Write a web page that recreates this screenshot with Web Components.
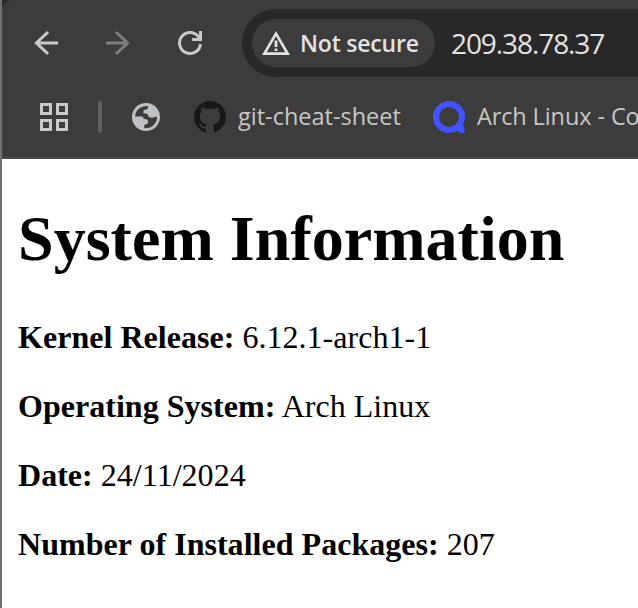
<!DOCTYPE html>
<html lang="en">
<head>
<meta charset="utf-8">
<title>System Information</title>
<style>
html,body{margin:0;height:100%;overflow:hidden;background:#fff}
</style>
</head>
<body>
<browser-window>
  <tool-bar slot="chrome">
    <ui-icon name="back"></ui-icon>
    <ui-icon name="forward"></ui-icon>
    <ui-icon name="reload"></ui-icon>
    <address-bar status="Not secure">209.38.78.37</address-bar>
  </tool-bar>
  <bookmark-bar slot="chrome">
    <ui-icon slot="apps" name="apps"></ui-icon>
    <book-mark icon="globe"></book-mark>
    <book-mark icon="github" style="--track:0px">git-cheat-sheet</book-mark>
    <book-mark icon="arch" style="--track:-.1px">Arch Linux - Co</book-mark>
  </bookmark-bar>
  <system-info heading="System Information">
    <info-line label="Kernel Release:">6.12.1-arch1-1</info-line>
    <info-line label="Operating System:">Arch Linux</info-line>
    <info-line label="Date:">24/11/2024</info-line>
    <info-line label="Number of Installed Packages:">207</info-line>
  </system-info>
</browser-window>
<script>
class Base extends HTMLElement{
  constructor(){super();this.attachShadow({mode:'open'});}
  connectedCallback(){this.shadowRoot.innerHTML=this.render();}
}
const icons={
  back:[36,36,'<path fill="#c9c9c9" d="M30 16.400H12.100l9.100-8.300L19 6 6.200 18 19 30l2.200-2.100-9.100-8.300H30z"/>'],
  forward:[36,36,'<path fill="#7d7d7d" d="M6 16.400H23.900l-9.100-8.300L17 6l12.800 12L17 30l-2.200-2.100 9.100-8.300H6z"/>'],
  reload:[36,36,'<path fill="none" stroke="#c9c9c9" stroke-width="3" d="M28.500 19A10.500 10.500 0 1 1 27 12.500L28 14M28.500 6V14.500H20"/>'],
  apps:[28,28,'<path fill="none" stroke="#c9c9c9" stroke-width="3" d="M1.500 1.500h9v9h-9zM17.500 1.500h9v9h-9zM1.500 17.500h9v9h-9zM17.500 17.500h9v9h-9z"/>'],
  globe:[32,32,'<circle cx="16" cy="16" r="14" fill="#bdc1c6"/><path fill="#3c3c3c" d="M5 15.600A11 11 0 0 1 14 5.200L18 5V6.500Q18 8.300 16 8.600Q13.400 8.700 13.400 10.500V12.400H16Q18.300 12.600 18.400 15.500Q20.500 17.500 23 16.500L27 15.600A11 11 0 0 1 14.300 27V23.700Q18 23.500 18 21V19.500Q17.800 18.500 16 18.300Q12.800 18 12.600 15.600z"/>'],
  github:[32,32,'<path transform="scale(2)" fill="#181616" d="M8 0C3.580 0 0 3.580 0 8c0 3.540 2.290 6.530 5.470 7.590.4.070.55-.17.55-.38 0-.19-.01-.82-.01-1.490-2.010.37-2.530-.49-2.690-.94-.09-.23-.48-.94-.82-1.130-.28-.15-.68-.52-.01-.53.63-.01 1.080.58 1.230.82.72 1.210 1.870.87 2.330.66.07-.52.28-.87.51-1.070-1.780-.2-3.640-.89-3.640-3.950 0-.87.31-1.590.82-2.150-.08-.2-.36-1.020.08-2.120 0 0 .67-.21 2.200.82.64-.18 1.320-.27 2-.27s1.360.09 2 .27c1.530-1.040 2.200-.82 2.200-.82.44 1.100.16 1.920.08 2.120.51.56.82 1.270.82 2.150 0 3.070-1.870 3.750-3.650 3.950.29.25.54.73.54 1.480 0 1.070-.01 1.930-.01 2.200 0 .21.15.46.55.38A8.010 8.010 0 0 0 16 8c0-4.420-3.580-8-8-8z"/>'],
  arch:[32,32,'<circle cx="16" cy="16" r="13" fill="none" stroke="#4353ff" stroke-width="6"/><path fill="#4353ff" d="M29 22.500c0 2 2.500 3 2.500 5V32c-3.500 0-6.500-.5-8-2z"/>'],
  warning:[30,26,'<path fill="#e3e3e3" fill-rule="evenodd" d="M1 25L15 1l14 24zM5.700 22.200h18.600L15 6.300z"/><path fill="#e3e3e3" d="M13.600 10.500h2.800v6.500h-2.800zM13.600 18.500h2.800v2.500h-2.800z"/>']
};
customElements.define('ui-icon',class extends Base{
  render(){const [w,h,g]=icons[this.getAttribute('name')];
    return `<style>:host{display:block;flex:none;width:${w}px;height:${h}px}svg{display:block}</style><svg width="${w}" height="${h}" viewBox="0 0 ${w} ${h}">${g}</svg>`;}
});
customElements.define('browser-window',class extends Base{
  render(){return `<style>
  :host{display:flex;height:608px;box-sizing:border-box;overflow:hidden;background:#2b2b2b}
  .edge{width:2px;flex:none;background:#717171}
  .frame{flex:1;min-width:0;display:flex;flex-direction:column}
  .chrome{height:159px;flex:none;box-sizing:border-box;background:#3c3c3c;border-bottom:2px solid #484848;border-top-left-radius:10px}
  .page{flex:1;background:#fff}
  </style><div class="edge"></div><div class="frame"><div class="chrome"><slot name="chrome"></slot></div><div class="page"><slot></slot></div></div>`;}
});
customElements.define('tool-bar',class extends Base{
  render(){return `<style>:host{display:flex;align-items:center;gap:36px;height:86px;padding-left:26px}
  ::slotted(address-bar){margin-left:-2px}</style><slot></slot>`;}
});
customElements.define('address-bar',class extends Base{
  render(){return `<style>
  :host{display:flex;align-items:center;box-sizing:border-box;flex:none;width:440px;height:68px;border-radius:34px;background:#282828;padding-left:10px;font-family:"Open Sans","Noto Sans",sans-serif;color:#e3e3e3}
  .chip{display:flex;align-items:center;box-sizing:border-box;width:183px;height:48px;border-radius:24px;background:#3c3c3c;padding-left:9px;gap:9px;font-size:23px;font-weight:600;white-space:nowrap;letter-spacing:-.2px}
  .chip span,.url{padding-bottom:1px}
  .url{margin-left:16px;font-size:28px;white-space:nowrap;letter-spacing:-1.08px}
  </style><div class="chip"><ui-icon name="warning"></ui-icon><span>${this.getAttribute('status')}</span></div><span class="url"><slot></slot></span>`;}
});
customElements.define('bookmark-bar',class extends Base{
  render(){return `<style>:host{display:flex;align-items:center;height:62px;padding-left:38px;overflow:hidden}
  i{width:4px;height:32px;border-radius:2px;background:#606060;margin:0 28px 0 30px;flex:none}
  .marks{display:flex;gap:32px}</style><slot name="apps"></slot><i></i><div class="marks"><slot></slot></div>`;}
});
customElements.define('book-mark',class extends Base{
  render(){return `<style>:host{display:flex;align-items:center;flex:none;gap:12px;height:32px;color:#c7c7c7;font:23.500px "Open Sans","Noto Sans",sans-serif;white-space:nowrap;letter-spacing:var(--track,0px)}span{padding-bottom:2px}</style><ui-icon name="${this.getAttribute('icon')}"></ui-icon>${this.textContent.trim()?'<span><slot></slot></span>':''}`;}
});
customElements.define('system-info',class extends Base{
  render(){return `<style>:host{display:block;padding:43px 16px 0;color:#000;font-family:"Liberation Serif","Times New Roman",serif}
  h1{margin:0 0 43px;font-size:64px;line-height:74px;font-weight:700;white-space:nowrap;letter-spacing:.04px}</style><h1>${this.getAttribute('heading')}</h1><slot></slot>`;}
});
customElements.define('info-line',class extends Base{
  render(){return `<style>:host{display:block;font-size:32px;line-height:37px;margin-bottom:32px;white-space:nowrap;letter-spacing:.03px}</style><b>${this.getAttribute('label')}</b> <slot></slot>`;}
});
</script>
</body>
</html>
